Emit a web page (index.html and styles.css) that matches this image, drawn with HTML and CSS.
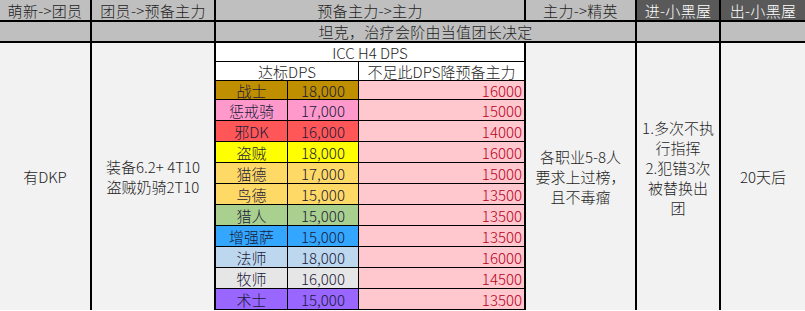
FILE: index.html
```html
<!DOCTYPE html>
<html lang="zh-CN">
<head>
<meta charset="utf-8">
<title>DKP</title>
<link rel="stylesheet" href="styles.css">
</head>
<body>
<div class="sheet">
  <div class="cell hd col-1 row-1">萌新-&gt;团员</div>
  <div class="cell hd col-2 row-1">团员-&gt;预备主力</div>
  <div class="cell hd col-sub row-1">预备主力-&gt;主力</div>
  <div class="cell hd col-6 row-1">主力-&gt;精英</div>
  <div class="cell hd dark col-7 row-1">进-小黑屋</div>
  <div class="cell hd dark col-8 row-1">出-小黑屋</div>

  <div class="cell hd col-1 row-2"></div>
  <div class="cell hd col-2 row-2"></div>
  <div class="cell hd col-wide row-2">坦克，治疗会阶由当值团长决定</div>
  <div class="cell hd col-7 row-2"></div>
  <div class="cell hd col-8 row-2"></div>

  <div class="cell body col-1 row-body">有DKP</div>
  <div class="cell body col-2 row-body">装备6.2+ 4T10<br>盗贼奶骑2T10</div>
  <div class="cell body col-6 row-body">各职业5-8人<br>要求上过榜，<br>且不毒瘤</div>
  <div class="cell body col-7 row-body raise">1.多次不执<br>行指挥<br>2.犯错3次<br>被替换出<br>团</div>
  <div class="cell body col-8 row-body">20天后</div>

  <div class="cell sub white col-sub row-3 edge">ICC H4 DPS</div>
  <div class="cell sub white col-req row-4">达标DPS</div>
  <div class="cell sub white col-5 row-4 edge">不足此DPS降预备主力</div>

  <div class="cell sub cls warrior">战士</div><div class="cell sub cls warrior">18,000</div><div class="cell sub low edge">16000</div>
  <div class="cell sub cls paladin">惩戒骑</div><div class="cell sub cls paladin">17,000</div><div class="cell sub low edge">15000</div>
  <div class="cell sub cls dk">邪DK</div><div class="cell sub cls dk">16,000</div><div class="cell sub low edge">14000</div>
  <div class="cell sub cls rogue">盗贼</div><div class="cell sub cls rogue">18,000</div><div class="cell sub low edge">16000</div>
  <div class="cell sub cls druid">猫德</div><div class="cell sub cls druid">17,000</div><div class="cell sub low edge">15000</div>
  <div class="cell sub cls druid">鸟德</div><div class="cell sub cls druid">15,000</div><div class="cell sub low edge">13500</div>
  <div class="cell sub cls hunter">猎人</div><div class="cell sub cls hunter">15,000</div><div class="cell sub low edge">13500</div>
  <div class="cell sub cls shaman">增强萨</div><div class="cell sub cls shaman">15,000</div><div class="cell sub low edge">13500</div>
  <div class="cell sub cls mage">法师</div><div class="cell sub cls mage">18,000</div><div class="cell sub low edge">16000</div>
  <div class="cell sub cls priest">牧师</div><div class="cell sub cls priest">16,000</div><div class="cell sub low edge">14500</div>
  <div class="cell sub cls warlock">术士</div><div class="cell sub cls warlock">15,000</div><div class="cell sub low edge">13500</div>
</div>
</body>
</html>
```

FILE: styles.css
```css
* { box-sizing: border-box; }
html, body { margin: 0; padding: 0; background: #ffffff; }
body {
  font-family: "Noto Sans CJK SC", "Noto Sans", sans-serif;
  font-size: 15px;
  font-weight: 300;
  color: #1e1e1e;
}
.sheet {
  display: grid;
  width: 805px;
  grid-template-columns: 92px 124px 72px 71px 167px 111px 84px 84px;
  grid-template-rows: 22px 21px 19px 19px 19px repeat(10, 21px);
}
.cell {
  display: flex;
  align-items: center;
  justify-content: center;
  text-align: center;
  line-height: 19px;
  white-space: nowrap;
  overflow: visible;
}
.hd {
  background: #bfbfbf;
  border-right: 2px solid #000;
  border-bottom: 2px solid #000;
  letter-spacing: 0.3px;
}
.dark { background: #595959; color: #ffffff; }
.col-8.hd, .col-8.body { border-right: 0; }
.body {
  background: #f2f2f2;
  border-right: 2px solid #000;
  line-height: 20px;
}
.raise { padding-bottom: 18px; }

.col-1 { grid-column: 1; }
.col-2 { grid-column: 2; }
.col-sub { grid-column: 3 / 6; }
.col-req { grid-column: 3 / 5; }
.col-5 { grid-column: 5; }
.col-wide { grid-column: 3 / 7; }
.col-6 { grid-column: 6; }
.col-7 { grid-column: 7; }
.col-8 { grid-column: 8; }
.row-1 { grid-row: 1; }
.row-2 { grid-row: 2; }
.row-3 { grid-row: 3; }
.row-4 { grid-row: 4; }
.row-body { grid-row: 3 / 16; }

.sub {
  border-right: 1px solid #000;
  border-bottom: 1px solid #000;
}
.sub.edge { border-right: 2px solid #000; }
.white { background: #ffffff; }
.cls { color: #1a1a3a; }
.low {
  background: #ffc7ce;
  color: #b5001a;
  justify-content: flex-end;
  padding-right: 2px;
}
.warrior { background: #bf8f00; }
.paladin { background: #ff99cc; }
.dk { background: #ff5757; }
.rogue { background: #ffff00; }
.druid { background: #ffd966; }
.hunter { background: #a9d08e; }
.shaman { background: #33a6ff; }
.mage { background: #bdd7ee; }
.priest { background: #e7e6e6; }
.warlock { background: #9966ff; }
```
